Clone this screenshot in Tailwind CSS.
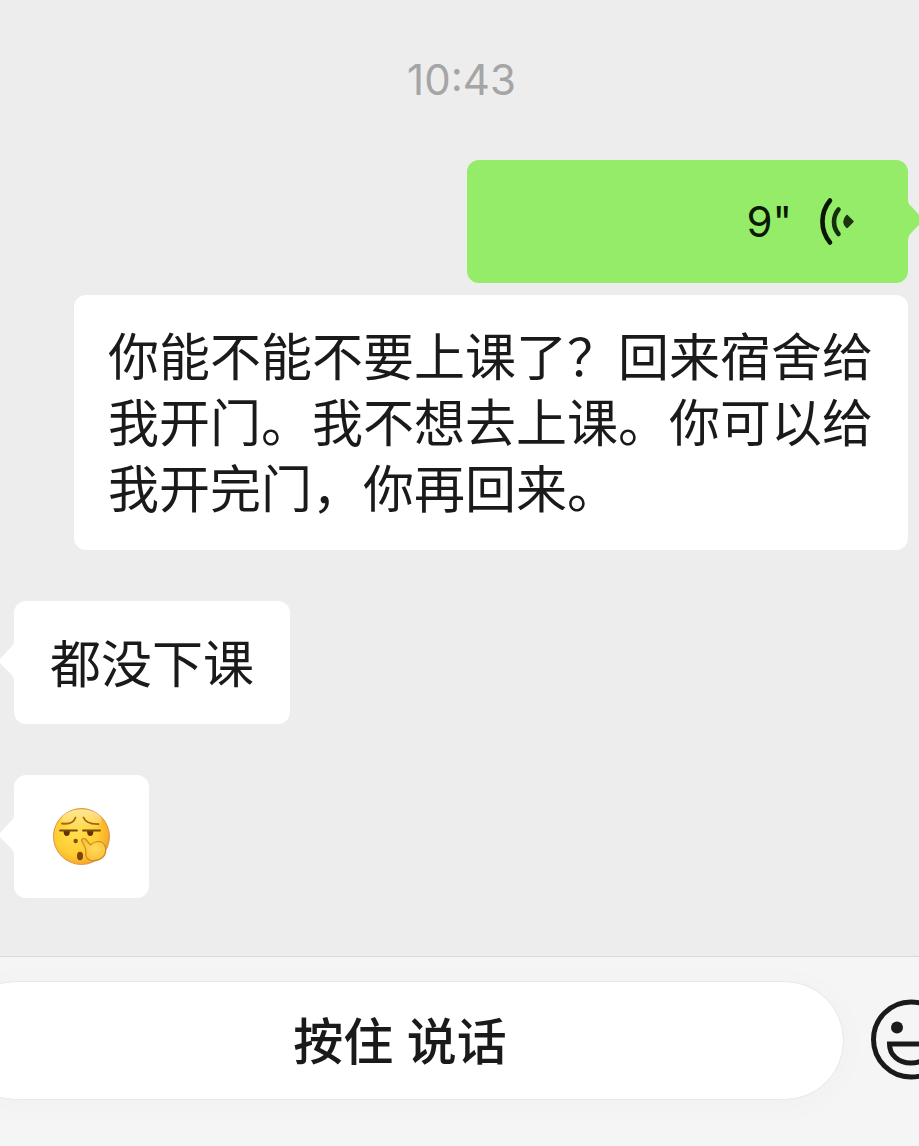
<!DOCTYPE html>
<html lang="zh-CN">
<head>
    <meta charset="UTF-8">
    <meta name="viewport" content="width=device-width, initial-scale=1.0">
    <title>聊天</title>

    <!-- Tailwind CSS -->
    <script src="https://cdn.jsdelivr.net/npm/@tailwindcss/browser@4"></script>
</head>
<body class="flex min-h-screen flex-col overflow-x-hidden bg-[#ededed] font-[Inter,'Noto_Sans_CJK_SC',sans-serif] text-[#1a1a1a]">

    <!-- Messages -->
    <main class="flex flex-1 flex-col pt-[47px]">
        <time class="self-center pl-1 text-[42px] leading-[66px] text-[#a5a5a5]">10:43</time>

        <!-- Voice message -->
        <button type="button" aria-label="播放语音 9 秒" class="relative mt-[47px] mr-[11px] flex h-[123px] w-[48%] items-center justify-end gap-6 self-end rounded-xl bg-[#95ec69] pr-[52px]">
            <span class="text-[42px] leading-[66px] text-[#0a1a05]">9"</span>
            <svg class="h-[50px] w-10" viewBox="0 0 40 50" fill="none" stroke-linecap="round" aria-hidden="true">
                <path d="M14 3.5A33 33 0 0 0 14 45.5" stroke="#081603" stroke-width="4.6"/>
                <path d="M22.5 12.5A19 19 0 0 0 22.5 37" stroke="#14300a" stroke-width="4.6"/>
                <path d="M31 19L36.5 24.5L31 30Q26 24.5 31 19Z" fill="#1b3510" stroke="#1b3510" stroke-width="2.4" stroke-linejoin="round"/>
            </svg>
            <svg class="absolute top-10 left-full h-10 w-4" viewBox="0 0 16 40" aria-hidden="true">
                <path d="M-1 0H0Q0 4 3 6L14 18Q16 20 14 22L3 33Q0 36 0 40H-1Z" fill="#95ec69"/>
            </svg>
        </button>

        <!-- Voice transcript -->
        <p class="mt-3 mr-[11px] ml-[74px] rounded-xl bg-white px-[34px] pt-[30px] pb-[27px] text-[51px] leading-[66px]">你能不能不要上课了？回来宿舍给我开门。我不想去上课。你可以给我开完门，你再回来。</p>

        <div class="relative mt-[51px] ml-3.5 flex h-[123px] items-center self-start rounded-xl bg-white px-9">
            <svg class="absolute top-10 right-full h-10 w-4" viewBox="0 0 16 40" aria-hidden="true">
                <path d="M17 0H16Q16 4 13 6L2 18Q0 20 2 22L13 33Q16 36 16 40H17Z" fill="#fff"/>
            </svg>
            <p class="pt-1 text-[51px] leading-[66px]">都没下课</p>
        </div>

        <div class="relative mt-[51px] mb-[58px] ml-3.5 flex h-[123px] items-center self-start rounded-xl bg-white px-[37px]">
            <svg class="absolute top-10 right-full h-10 w-4" viewBox="0 0 16 40" aria-hidden="true">
                <path d="M17 0H16Q16 4 13 6L2 18Q0 20 2 22L13 33Q16 36 16 40H17Z" fill="#fff"/>
            </svg>
            <svg class="size-[61px]" viewBox="-1 0 61 61" fill="none" stroke-linecap="round" role="img" aria-label="嘘">
                <defs>
                    <radialGradient id="face" cx="0.4" cy="0.42" r="0.64">
                        <stop offset="0" stop-color="#ffe04e"/>
                        <stop offset="0.6" stop-color="#ffce33"/>
                        <stop offset="0.88" stop-color="#f9b02a"/>
                        <stop offset="1" stop-color="#e5913a"/>
                    </radialGradient>
                    <linearGradient id="shine" x1="0" y1="0" x2="0" y2="1">
                        <stop offset="0" stop-color="#fff3c4" stop-opacity="0.7"/>
                        <stop offset="1" stop-color="#fff3c4" stop-opacity="0"/>
                    </linearGradient>
                    <radialGradient id="hand" cx="0.55" cy="0.45" r="0.6">
                        <stop offset="0" stop-color="#ffdb58"/>
                        <stop offset="1" stop-color="#fbbe38"/>
                    </radialGradient>
                </defs>
                <circle cx="29.5" cy="30.5" r="28" fill="url(#face)" stroke="#dd9448" stroke-width="1"/>
                <ellipse cx="29.5" cy="14" rx="20" ry="10.5" fill="url(#shine)"/>
                <path d="M10 17.500Q21 19 23.500 11.500M31.500 11.500Q34.500 18.500 46.500 18" stroke="#a0690f" stroke-width="1.800"/>
                <path d="M11.500 24.500H18Q18 30 14.700 30Q11.500 30 11.500 24.500ZM35 24.500H41.500Q41.500 30 38.300 30Q35 30 35 24.500Z" fill="#653004"/>
                <path d="M8 24.500H25M31 24.500H48" stroke="#7a4a0c" stroke-width="1.800"/>
                <circle cx="23.700" cy="35" r="2.200" fill="#8a4b08"/>
                <ellipse cx="28" cy="50" rx="3" ry="4.200" fill="#7a430a"/>
                <path d="M29.500 34.500Q30.500 31.500 33.500 33L38.500 39Q42 35.500 47 35.500Q52 36 53.500 41.500Q54.500 48 50.500 51.500Q45.500 55.500 39 54.500Q34 53 33.700 48Q34.500 43 32 39.500Z" fill="url(#hand)" stroke="#cb8d24" stroke-width="1.200" stroke-linejoin="round"/>
            </svg>
        </div>
    </main>

    <!-- Input bar -->
    <footer class="flex h-[190px] items-start overflow-hidden border-t border-[#d9d9d9] bg-[#f5f5f5] pt-6">
        <button type="button" class="-ml-11 h-[119px] flex-1 rounded-full border border-[#e8e8e8] bg-white pt-1 text-[50px] font-medium shadow-[0_4px_36px_rgba(0,0,0,0.025)]">按住 说话</button>
        <button type="button" aria-label="表情" class="mt-[18px] -mr-8 ml-[26px] size-[81px] shrink-0">
            <svg class="size-full" viewBox="0 0 81 81" fill="none" stroke="#1a1a1a" stroke-width="5" aria-hidden="true">
                <circle cx="41" cy="40.500" r="37.500"/>
                <circle cx="27" cy="28.500" r="6" fill="#1a1a1a" stroke="none"/>
                <circle cx="56" cy="28.500" r="6" fill="#1a1a1a" stroke="none"/>
                <path d="M19.500 45H62.500C62.500 56 53.500 64 41 64S19.500 56 19.500 45Z"/>
            </svg>
        </button>
    </footer>
</body>
</html>
